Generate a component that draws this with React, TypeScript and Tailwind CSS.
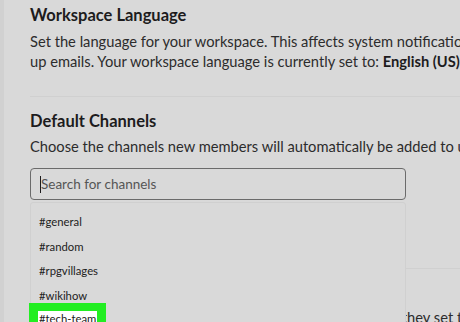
const channels = ["#general", "#random", "#rpgvillages", "#wikihow"];

export default function App() {
  return (
    <div
      className="relative h-[322px] w-[460px] overflow-hidden bg-[#d9d9d9] text-[#1d1c1d]"
      style={{ fontFamily: "Lato, 'Liberation Sans', sans-serif" }}
    >
      {/* left rail */}
      <div className="absolute left-0 top-0 h-full w-[4px] bg-[#d1d1d1]" />

      <div className="w-[700px] pl-[30px]">
        {/* Workspace language */}
        <section className="pt-[4px] pb-[25px]">
          <h2 className="text-[16.5px] font-bold leading-[22px]">Workspace Language</h2>
          <p className="mt-[5px] whitespace-nowrap text-[14.7px] leading-[20px] text-[#2c2c2c]">
            Set the language for your workspace. This affects system notifications and sign
            <br />
            up emails. Your workspace language is currently set to:{" "}
            <span className="font-bold text-[#1d1c1d]">English (US)</span>.
          </p>
        </section>

        <div className="h-px bg-[#d0d0d0]" />

        {/* Default channels */}
        <section className="pt-[13px]">
          <h2 className="text-[16.5px] font-bold leading-[22px]">Default Channels</h2>
          <p className="mt-[4px] whitespace-nowrap text-[14.7px] leading-[20px] text-[#2c2c2c]">
            Choose the channels new members will automatically be added to upon joining.
          </p>

          <div className="mt-[12px] w-[376px]">
            <div className="flex h-[32px] items-center rounded-[4px] border border-[#6b6b6b] bg-[#d9d9d9] pl-[9px]">
              <span className="h-[17px] w-px bg-[#1d1c1d]" />
              <span className="text-[13.5px] text-[#555]">Search for channels</span>
            </div>
          </div>

          {/* next section, mostly hidden beneath the menu */}
          <div className="mt-[68px] h-px bg-[#d0d0d0]" />
          <div className="pt-[12px]">
            <h2 className="text-[16.5px] font-bold leading-[22px]">Display Names</h2>
            <p className="mt-[4px] whitespace-nowrap text-[14.7px] leading-[20px] text-[#2c2c2c]">
              Pick whether you show full names or display names when they set their names.
            </p>
          </div>
        </section>
      </div>

      {/* channel menu */}
      <div className="absolute left-[30px] top-[202px] h-[140px] w-[376px] rounded-[3px] border border-[#d0d0d0] bg-[#d9d9d9] pt-[11px] pl-[8px]">
        {channels.map((c) => (
          <div key={c} className="h-[24.5px] text-[11.3px] leading-[15px] text-[#222]">
            {c}
          </div>
        ))}
      </div>

      {/* highlight */}
      <div className="absolute left-[29px] top-[303px] flex h-[30px] w-[77px] items-start bg-[#22ee22] pl-[9px] pt-[8px]">
        <div className="bg-white px-[1px] text-[11.3px] leading-[15px] text-[#222]">#tech-team</div>
      </div>
    </div>
  );
}
